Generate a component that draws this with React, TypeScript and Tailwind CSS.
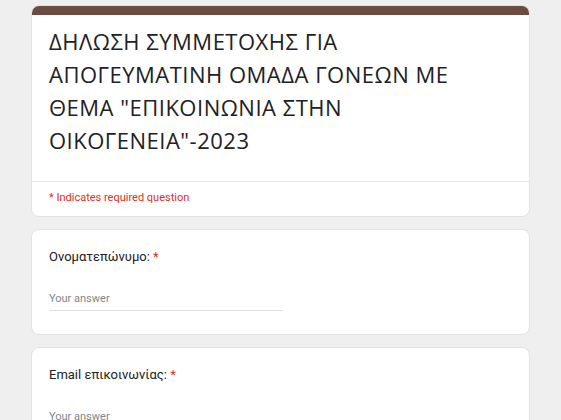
import React from 'react';

const titleLines = [
  'ΔΗΛΩΣΗ ΣΥΜΜΕΤΟΧΗΣ ΓΙΑ',
  'ΑΠΟΓΕΥΜΑΤΙΝΗ ΟΜΑΔΑ ΓΟΝΕΩΝ ΜΕ',
  'ΘΕΜΑ "ΕΠΙΚΟΙΝΩΝΙΑ ΣΤΗΝ',
  'ΟΙΚΟΓΕΝΕΙΑ"-2023',
];

const Question: React.FC<{ label: string }> = ({ label }) => (
  <div className="bg-white rounded-lg border border-[#e3e3e3] px-[17px] pt-[17px] pb-[23px]">
    <div className="text-[13px] leading-5 text-[#202124]">
      {label} <span className="text-[#d93025]">*</span>
    </div>
    <div className="mt-6 w-[234px] border-b border-[#e0e0e0] pb-[3px] text-[11px] leading-4 text-[#80868b]">
      Your answer
    </div>
  </div>
);

const App: React.FC = () => {
  return (
    <div className="h-[420px] overflow-hidden bg-[#efefef] px-[31px] pt-[5px] font-['Roboto','Noto_Sans',sans-serif]">
      <div className="flex flex-col gap-3">
        <div className="bg-white rounded-lg border border-[#e3e3e3] overflow-hidden">
          <div className="h-[9px] bg-[#6b4c42]" />
          <div className="px-[17px] pt-[10px] pb-6 border-b border-[#e6e6e6]">
            <h1 className="font-['Open_Sans','Noto_Sans',sans-serif] text-[22px] leading-[33px] text-[#202124] tracking-[0.5px]">
              {titleLines.map((l, i) => (
                <span key={i} className="block">{l}</span>
              ))}
            </h1>
          </div>
          <div className="px-[17px] pt-[8px] pb-[10px] text-[11px] leading-4 text-[#d93025]">
            * Indicates required question
          </div>
        </div>
        <Question label="Ονοματεπώνυμο:" />
        <Question label="Email επικοινωνίας:" />
      </div>
    </div>
  );
};

export default App;
